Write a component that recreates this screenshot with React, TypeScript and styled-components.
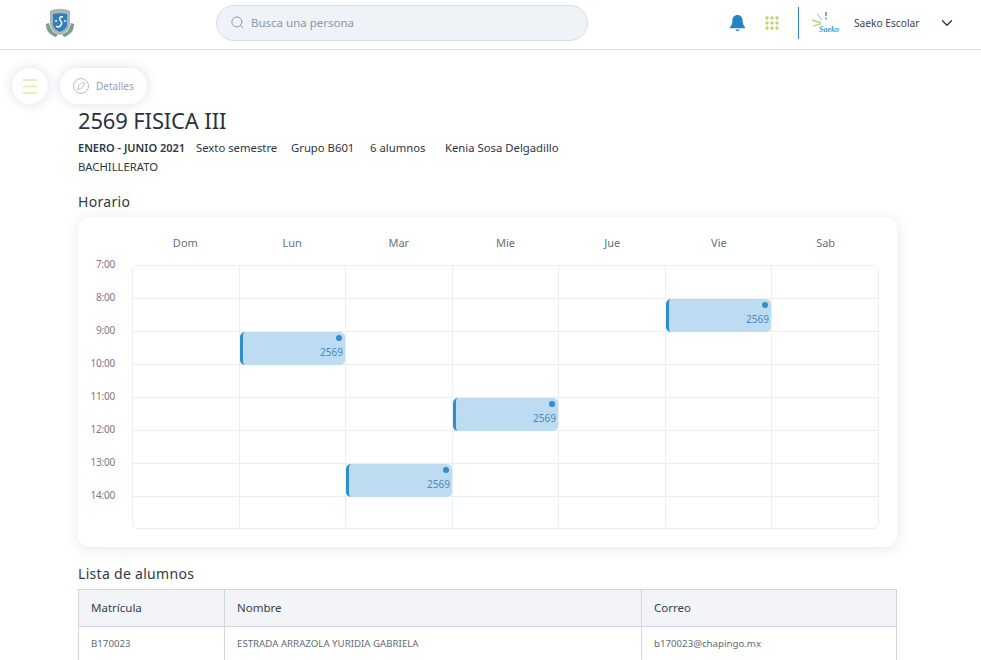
import React, {FC} from "react";
import styled, {createGlobalStyle} from "styled-components";
import {ChevronDown, Search} from "lucide-react";

const font = '"Noto Sans", "Open Sans", sans-serif'
const lineColor = '#eceef2'
const tableLine = '#cfd5e1'

const GlobalStyle = createGlobalStyle`
  html, body {
    margin: 0;
    height: 660px;
    overflow: hidden;
    background: #fff;
    font-family: ${font};
    color: #2c3644;
  }
`
const Header = styled.header`
  height: 49px;
  border-bottom: 1px solid #dfe1e4;
  display: flex;
  align-items: center;
  padding-left: 44px;
  padding-right: 25px;
`
const LogoSlot = styled.div`
  display: flex;
  margin-top: -3px;
`
const SearchBox = styled.div`
  width: 372px;
  height: 36px;
  margin-left: 140px;
  margin-top: -3px;
  box-sizing: border-box;
  border: 1px solid #d9dee6;
  border-radius: 18px;
  background: #eff2f7;
  display: flex;
  align-items: center;
  gap: 6px;
  padding-left: 13px;
  padding-bottom: 1px;
  font-size: 11.5px;
  color: #8c97aa;
`
const HeaderRight = styled.div`
  margin-left: auto;
  display: flex;
  align-items: center;
  margin-top: -3px;
`
const IconGap = styled.span`
  width: 19px;
`
const Divider = styled.div`
  width: 1px;
  height: 32px;
  background: #2f86bf;
  margin: 0 13px 0 19px;
`
const UserName = styled.span`
  width: 66px;
  white-space: nowrap;
  font-size: 10.2px;
  color: #3a4350;
  margin-left: 14px;
  margin-right: 18px;
`
const FloatingBar = styled.div`
  position: absolute;
  top: 68px;
  left: 12px;
  display: flex;
  gap: 12px;
`
const RoundButton = styled.div`
  width: 36px;
  height: 36px;
  border-radius: 50%;
  background: #fff;
  box-shadow: 0 0 12px rgba(90, 100, 160, 0.22);
  display: flex;
  align-items: center;
  justify-content: center;
`
const PillButton = styled.div`
  width: 87px;
  height: 36px;
  box-sizing: border-box;
  border-radius: 18px;
  background: #fff;
  box-shadow: 0 0 12px rgba(90, 100, 160, 0.22);
  display: flex;
  align-items: center;
  gap: 7px;
  padding-left: 13px;
  font-size: 10px;
  color: #94a2bb;
`
const Main = styled.main`
  width: 819px;
  margin-left: 78px;
  padding-top: 55px;
`
const Title = styled.h1`
  margin: 0;
  font-size: 22px;
  line-height: 30px;
  font-weight: 400;
  letter-spacing: -0.15px;
  color: #28323f;
`
const MetaRow = styled.div<{$tight?: boolean}>`
  display: flex;
  margin-top: ${props => props.$tight ? '-1px' : '3px'};
  font-size: 11.3px;
  line-height: 20px;
`
const MetaItem = styled.span<{$width: number; $bold?: boolean}>`
  width: ${props => props.$width}px;
  font-weight: ${props => props.$bold ? 600 : 400};
  font-size: ${props => props.$bold ? '11px' : 'inherit'};
  white-space: nowrap;
`
const SectionTitle = styled.h2`
  margin: 0;
  font-size: 14px;
  line-height: 20px;
  font-weight: 400;
  letter-spacing: 0.3px;
  color: #2f3946;
`
const ScheduleTitle = styled(SectionTitle)`
  margin-top: 15px;
`
const Card = styled.section`
  margin-top: 5px;
  height: 330px;
  box-sizing: border-box;
  border-radius: 12px;
  background: #fff;
  box-shadow: 0 2px 14px rgba(80, 90, 120, 0.14);
`
const DayRow = styled.div`
  height: 48px;
  margin-left: 54px;
  width: 747px;
  display: grid;
  grid-template-columns: repeat(7, 1fr);
  align-items: center;
`
const DayLabel = styled.span`
  text-align: center;
  font-size: 11px;
  color: #67707c;
  margin-top: 3px;
`
const CalendarBody = styled.div`
  display: flex;
`
const TimeColumn = styled.div`
  width: 54px;
  margin-top: -10px;
`
const TimeLabel = styled.div`
  height: 33px;
  line-height: 18px;
  padding-right: 17px;
  text-align: right;
  font-size: 10px;
  letter-spacing: -0.2px;
  color: #727b87;
`
const CalendarGrid = styled.div`
  width: 747px;
  height: 264px;
  box-sizing: border-box;
  border: 1px solid ${lineColor};
  border-radius: 6px;
  display: grid;
  grid-template-columns: 107px 106px 107px 106px 107px 106px 106px;
  grid-template-rows: repeat(7, 33px) 30px;
`
const Cell = styled.div`
  border-right: 1px solid ${lineColor};
  border-bottom: 1px solid ${lineColor};
  min-width: 0;
  &:nth-child(7n) { border-right: 0; }
  &:nth-last-child(-n + 7) { border-bottom: 0; }
`
const ClassEvent = styled.div`
  height: calc(100% + 1px);
  box-sizing: border-box;
  border-left: 3px solid #2f8fca;
  border-radius: 5px;
  background: #bddcf2;
  display: flex;
  flex-direction: column;
  align-items: flex-end;
  padding: 3px 2px 0 0;
  font-size: 10px;
  line-height: 14px;
  color: #3d8cc4;
`
const EventDot = styled.span`
  width: 6px;
  height: 6px;
  border-radius: 50%;
  background: #2f8fca;
  margin-bottom: 4px;
  margin-right: 1px;
`
const TableTitle = styled(SectionTitle)`
  margin-top: 17px;
`
const StudentTable = styled.table`
  margin-top: 5px;
  width: 819px;
  table-layout: fixed;
  border-collapse: collapse;
`
const HeadCell = styled.th<{$width?: number}>`
  width: ${props => props.$width ? `${props.$width}px` : 'auto'};
  height: 37px;
  box-sizing: border-box;
  padding: 0 12px 2px;
  border: 1px solid ${tableLine};
  background: #f3f4f7;
  text-align: left;
  font-size: 11.5px;
  font-weight: 400;
  color: #37414e;
`
const BodyCell = styled.td`
  height: 36px;
  box-sizing: border-box;
  padding: 0 12px 2px;
  border: 1px solid ${tableLine};
  font-size: 9.7px;
  color: #636c78;
`

const days = ['Dom', 'Lun', 'Mar', 'Mie', 'Jue', 'Vie', 'Sab']
const hours = ['7:00', '8:00', '9:00', '10:00', '11:00', '12:00', '13:00', '14:00']
// day index + row index of each class
const classes = [{day: 5, row: 1}, {day: 1, row: 2}, {day: 3, row: 4}, {day: 2, row: 6}]

const SchoolLogo: FC = () => (
  <svg width="32" height="32" viewBox="0 0 32 32">
    <path d="M2 17c0 7 4 11 10 13l2-3c-5-1-8-5-9-11z" fill="#7d9a8c" />
    <path d="M30 17c0 7-4 11-10 13l-2-3c5-1 8-5 9-11z" fill="#7d9a8c" />
    <path d="M6 4c6-3 14-3 20 0v13c0 6-5 9-10 11C11 26 6 23 6 17z" fill="#a9b7b4" />
    <path d="M9 7c4-1 10-1 14 0v10c0 4-3 6-7 8-4-2-7-4-7-8z" fill="#2f7fbd" />
    <path d="M19 10c-3-1-4 1-3 3s3 2 1 5-4 2-5 1" fill="none" stroke="#fff" strokeWidth="1.400" />
    <circle cx="21" cy="14" r="1" fill="#fff" />
    <circle cx="12" cy="14" r="1" fill="#fff" />
  </svg>
)
const BellIcon: FC = () => (
  <svg width="17" height="18" viewBox="0 0 17 18">
    <path d="M8.500 1C5.200 1 3.400 3.600 3.400 6.600c0 3.400-.9 5-2.400 6.600v1h15v-1c-1.500-1.600-2.400-3.200-2.400-6.600C13.600 3.600 11.800 1 8.500 1z" fill="#2482c5" />
    <path d="M6.500 15.500h4c-.3 1-1 1.500-2 1.500s-1.700-.5-2-1.500z" fill="#2482c5" />
  </svg>
)
const AppsIcon: FC = () => (
  <svg width="14" height="14" viewBox="0 0 14 14" fill="#c3d06f">
    {[2, 7, 12].flatMap(y => [2, 7, 12].map(x => (
      <circle key={`${x}-${y}`} cx={x} cy={y} r="1.700" />
    )))}
  </svg>
)
const SaekoLogo: FC = () => (
  <svg width="28" height="22" viewBox="0 0 28 22">
    <path d="M14 0v4" stroke="#c98ab8" strokeWidth="2" />
    <path d="M14 5v3" stroke="#9fd0e6" strokeWidth="2" />
    <path d="M5 2l5 6" stroke="#b9dcec" strokeWidth="1.500" />
    <path d="M0 8l9 3" stroke="#c3d06f" strokeWidth="1.500" />
    <path d="M1 14l8-2" stroke="#bcd4a0" strokeWidth="1.500" />
    <text x="7" y="20" fontSize="8" fontWeight="700" fontStyle="italic" fontFamily="Liberation Serif, serif" fill="#3f9cc4">Saeko</text>
  </svg>
)
const MenuIcon: FC = () => (
  <svg width="14" height="15" viewBox="0 0 14 15" stroke="#e2e6a6" strokeWidth="1.500">
    <path d="M0 1h14M0 7.500h14M0 14h14" />
  </svg>
)
const CompassIcon: FC = () => (
  <svg width="16" height="16" viewBox="0 0 16 16" fill="none" stroke="#a3afc4" strokeWidth="0.800">
    <circle cx="8" cy="8" r="7.500" />
    <path d="M11.500 4.500c-3 .2-6 1.800-7 7 4.500-.5 6.800-3.500 7-7z" />
  </svg>
)

const App: FC = () => {
  return (
    <>
      <GlobalStyle />
      <Header>
        <LogoSlot><SchoolLogo /></LogoSlot>
        <SearchBox>
          <Search size={15} strokeWidth={1.300} color="#7d899d" />
          Busca una persona
        </SearchBox>
        <HeaderRight>
          <BellIcon />
          <IconGap />
          <AppsIcon />
          <Divider />
          <SaekoLogo />
          <UserName>Saeko Escolar</UserName>
          <ChevronDown size={18} strokeWidth={1.800} color="#2c3644" />
        </HeaderRight>
      </Header>
      <FloatingBar>
        <RoundButton><MenuIcon /></RoundButton>
        <PillButton><CompassIcon />Detalles</PillButton>
      </FloatingBar>
      <Main>
        <Title>2569 FISICA III</Title>
        <MetaRow>
          <MetaItem $width={118} $bold>ENERO - JUNIO 2021</MetaItem>
          <MetaItem $width={95}>Sexto semestre</MetaItem>
          <MetaItem $width={79}>Grupo B601</MetaItem>
          <MetaItem $width={75}>6 alumnos</MetaItem>
          <MetaItem $width={130}>Kenia Sosa Delgadillo</MetaItem>
        </MetaRow>
        <MetaRow $tight>
          <MetaItem $width={118}>BACHILLERATO</MetaItem>
        </MetaRow>
        <ScheduleTitle>Horario</ScheduleTitle>
        <Card>
          <DayRow>
            {days.map(day => <DayLabel key={day}>{day}</DayLabel>)}
          </DayRow>
          <CalendarBody>
            <TimeColumn>
              {hours.map(hour => <TimeLabel key={hour}>{hour}</TimeLabel>)}
            </TimeColumn>
            <CalendarGrid>
              {hours.map((hour, row) => days.map((day, col) => (
                <Cell key={`${hour}-${day}`}>
                  {classes.some(c => c.day === col && c.row === row) && (
                    <ClassEvent>
                      <EventDot />
                      2569
                    </ClassEvent>
                  )}
                </Cell>
              )))}
            </CalendarGrid>
          </CalendarBody>
        </Card>
        <TableTitle>Lista de alumnos</TableTitle>
        <StudentTable>
          <thead>
            <tr>
              <HeadCell $width={146}>Matrícula</HeadCell>
              <HeadCell $width={417}>Nombre</HeadCell>
              <HeadCell>Correo</HeadCell>
            </tr>
          </thead>
          <tbody>
            <tr>
              <BodyCell>B170023</BodyCell>
              <BodyCell>ESTRADA ARRAZOLA YURIDIA GABRIELA</BodyCell>
              <BodyCell>b170023@chapingo.mx</BodyCell>
            </tr>
          </tbody>
        </StudentTable>
      </Main>
    </>
  )
}

export default App
